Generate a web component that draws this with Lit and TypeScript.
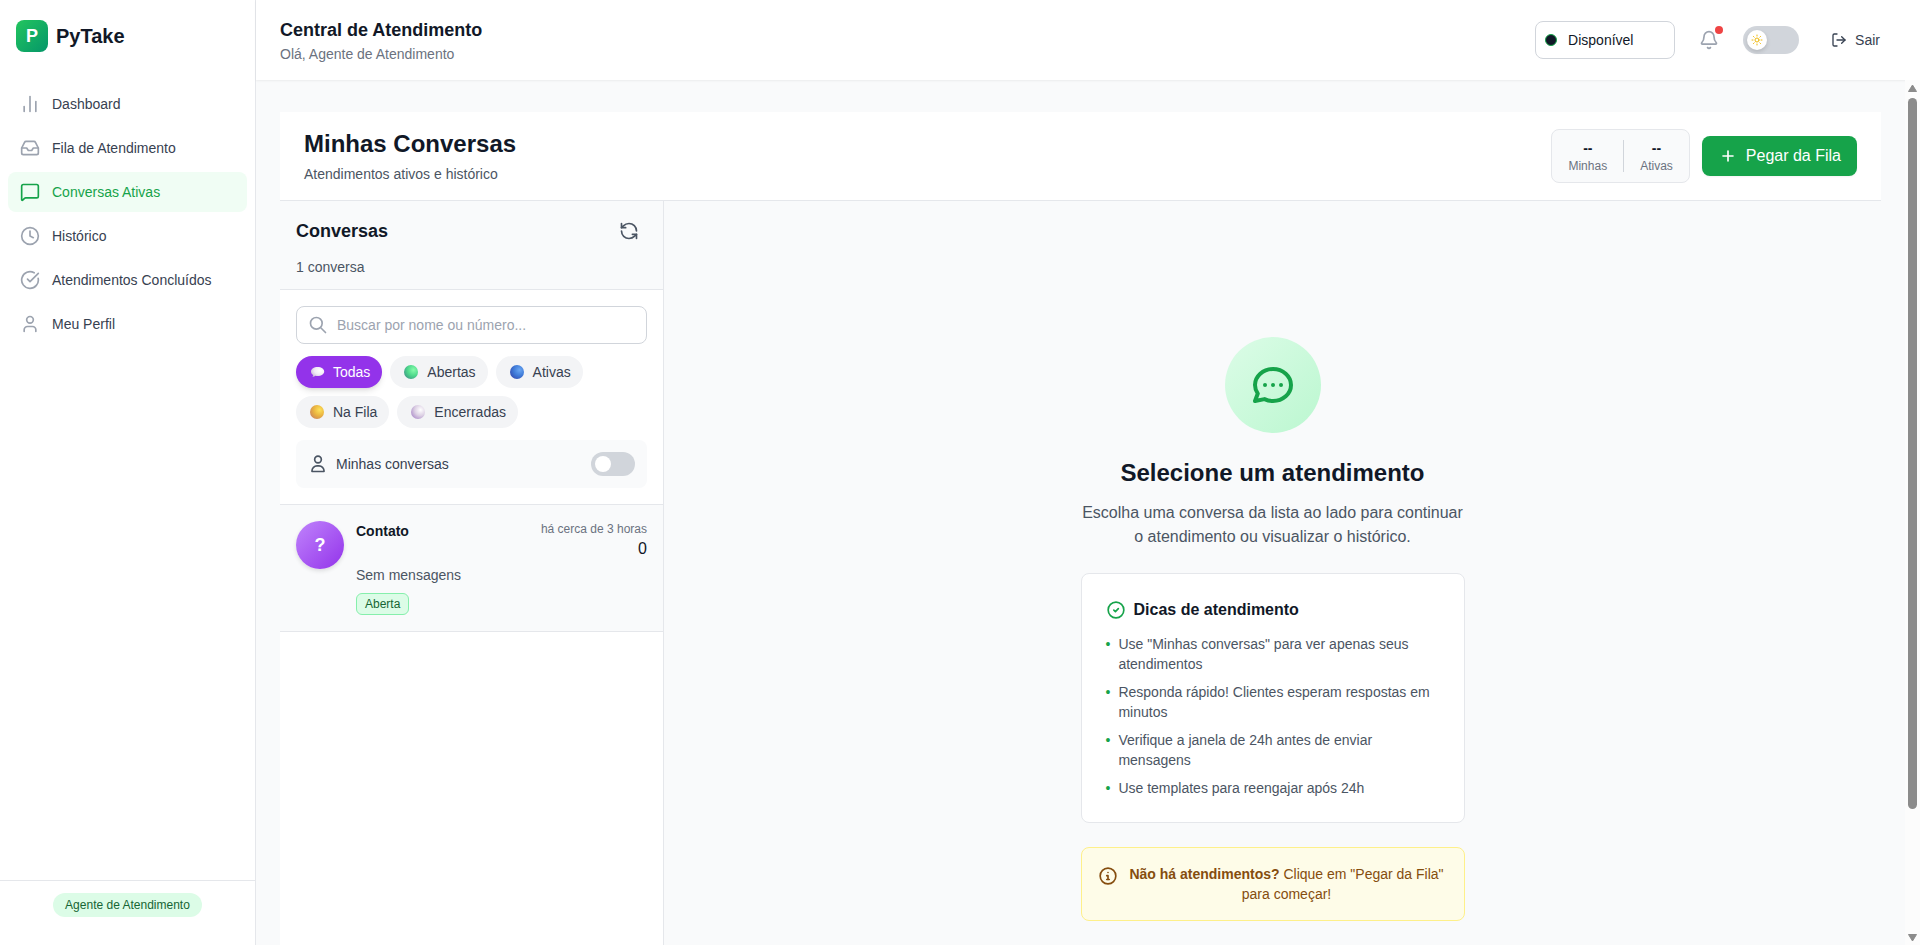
import { LitElement, html, css, svg, TemplateResult } from "lit";
import { customElement, property, state } from "lit/decorators.js";
import { classMap } from "lit/directives/class-map.js";

const GLYPHS: Record<string, TemplateResult> = {
  chart: svg`<path d="M5 21v-6"/><path d="M12 21V3"/><path d="M19 21V9"/>`,
  inbox: svg`<polyline points="22 12 16 12 14 15 10 15 8 12 2 12"/><path d="M5.45 5.11 2 12v6a2 2 0 0 0 2 2h16a2 2 0 0 0 2-2v-6l-3.45-6.89A2 2 0 0 0 16.76 4H7.24a2 2 0 0 0-1.79 1.11z"/>`,
  message: svg`<path d="M22 17a2 2 0 0 1-2 2H6.828a2 2 0 0 0-1.414.586l-2.202 2.202A.71.71 0 0 1 2 21.286V5a2 2 0 0 1 2-2h16a2 2 0 0 1 2 2z"/>`,
  clock: svg`<circle cx="12" cy="12" r="10"/><path d="M12 6v6l4 2"/>`,
  done: svg`<path d="M21.801 10A10 10 0 1 1 17 3.335"/><path d="m9 11 3 3L22 4"/>`,
  user: svg`<path d="M19 21v-2a4 4 0 0 0-4-4H9a4 4 0 0 0-4 4v2"/><circle cx="12" cy="7" r="4"/>`,
  person: svg`<circle cx="12" cy="6.6" r="4"/><path d="M4.800 21v-.8a6 6 0 0 1 6-6h2.400a6 6 0 0 1 6 6v.8z"/>`,
  bell: svg`<path d="M10.268 21a2 2 0 0 0 3.464 0"/><path d="M3.262 15.326A1 1 0 0 0 4 17h16a1 1 0 0 0 .74-1.673C19.41 13.956 18 12.499 18 8A6 6 0 0 0 6 8c0 4.499-1.411 5.956-2.738 7.326"/>`,
  logout: svg`<path d="m16 17 5-5-5-5"/><path d="M21 12H9"/><path d="M9 21H5a2 2 0 0 1-2-2V5a2 2 0 0 1 2-2h4"/>`,
  plus: svg`<path d="M6 12h12"/><path d="M12 6v12"/>`,
  search: svg`<path d="m21 21-6-6m2-5a7 7 0 1 1-14 0 7 7 0 0 1 14 0z"/>`,
  refresh: svg`<path d="M21 12a9 9 0 0 0-9-9 9.75 9.75 0 0 0-6.74 2.74L3 8"/><path d="M3 3v5h5"/><path d="M3 12a9 9 0 0 0 9 9 9.75 9.75 0 0 0 6.74-2.74L21 16"/><path d="M16 16h5v5"/>`,
  chat: svg`<path d="M8 12h.01M12 12h.01M16 12h.01M21 12c0 4.418-4.030 8-9 8a9.863 9.863 0 0 1-4.255-.949L3 20l1.395-3.720C3.512 15.042 3 13.574 3 12c0-4.418 4.030-8 9-8s9 3.582 9 8z"/>`,
  tip: svg`<circle cx="12" cy="12" r="9.400"/><path d="m9.400 12.200 1.900 1.800 3.500-3.600"/>`,
  info: svg`<circle cx="12" cy="12" r="9.400"/><path d="M12 7.800h.01"/><path d="M10.500 11.600H12v4.400"/><path d="M10.500 16.200h3"/>`,
  sun: svg`<circle cx="12" cy="12" r="4"/><path d="M12 2v2M12 20v2M4.930 4.930l1.410 1.410M17.660 17.660l1.410 1.410M2 12h2M20 12h2M6.340 17.660l-1.410 1.410M19.070 4.930l-1.410 1.410"/>`,
};

@customElement("app-icon")
export class AppIcon extends LitElement {
  @property() name = "";

  static styles = css`
    :host { display: block; flex: none; width: 20px; height: 20px; }
    svg { display: block; width: 100%; height: 100%; }
  `;

  render() {
    return html`<svg viewBox="0 0 24 24" fill="none" stroke="currentColor" stroke-width="2" stroke-linecap="round" stroke-linejoin="round" aria-hidden="true">${GLYPHS[this.name]}</svg>`;
  }
}

@customElement("app-orb")
export class AppOrb extends LitElement {
  @property() kind = "";

  static styles = css`
    :host { display: block; flex: none; width: 17px; height: 18px; }
    svg { display: block; }
  `;

  private static tones: Record<string, string[]> = {
    green: ["#86fbab", "#4fd98c", "#3f9e86"],
    blue: ["#6aa6f2", "#3f7bd8", "#3551b4"],
    yellow: ["#fde25a", "#eab440", "#cf8a58"],
    white: ["#ffffff", "#dcd0e4", "#b193cc"],
    balloon: ["#ffffff", "#f1eaf6", "#cdbdd9"],
  };

  render() {
    const tone = AppOrb.tones[this.kind];
    return html`<svg width="18" height="18" viewBox="0 0 18 18" aria-hidden="true">
      <defs>
        <radialGradient id="g" cx="0.68" cy="0.35" r="0.75">
          <stop offset="0" stop-color=${tone[0]} />
          <stop offset="0.55" stop-color=${tone[1]} />
          <stop offset="1" stop-color=${tone[2]} />
        </radialGradient>
      </defs>
      ${this.kind === "balloon"
        ? svg`<path fill="url(#g)" d="M9.600 4c3.800 0 6.600 1.900 6.600 4.500s-2.800 4.500-6.600 4.500c-.8 0-1.600-.1-2.300-.3-.7.700-1.700 1.200-2.900 1.200.6-.6.800-1.300.7-2C3.700 11.100 3 9.900 3 8.500 3 5.900 5.800 4 9.600 4z"/>`
        : svg`<circle cx="9" cy="9" r="7" fill="url(#g)"/>`}
    </svg>`;
  }
}

@customElement("app-root")
export class AppRoot extends LitElement {
  @state() private filter = "Todas";

  private nav = [
    { icon: "chart", label: "Dashboard" },
    { icon: "inbox", label: "Fila de Atendimento" },
    { icon: "message", label: "Conversas Ativas", active: true },
    { icon: "clock", label: "Histórico" },
    { icon: "done", label: "Atendimentos Concluídos" },
    { icon: "user", label: "Meu Perfil" },
  ];

  private filters = [
    { kind: "balloon", label: "Todas" },
    { kind: "green", label: "Abertas" },
    { kind: "blue", label: "Ativas" },
    { kind: "yellow", label: "Na Fila" },
    { kind: "white", label: "Encerradas" },
  ];

  private tips = [
    'Use "Minhas conversas" para ver apenas seus atendimentos',
    "Responda rápido! Clientes esperam respostas em minutos",
    "Verifique a janela de 24h antes de enviar mensagens",
    "Use templates para reengajar após 24h",
  ];

  static styles = css`
    :host {
      display: flex;
      height: 100vh;
      overflow: hidden;
      background: #f9fafb;
      color: #111827;
      font: 16px/24px "Liberation Sans", Arial, sans-serif;
    }
    *, *::before, *::after { box-sizing: border-box; }
    h1, h2, h3, p, ul { margin: 0; padding: 0; }
    ul { list-style: none; }
    a { color: inherit; text-decoration: none; }
    button, input, select { margin: 0; font: inherit; color: inherit; }
    button { border: 0; background: none; cursor: pointer; }
    .small { font-size: 14px; line-height: 20px; }
    .tiny { font-size: 12px; line-height: 16px; }
    .muted { color: #6b7280; }
    .soft { color: #4b5563; }

    .sidebar {
      display: flex;
      flex-direction: column;
      flex: none;
      width: 256px;
      background: #fff;
      border-right: 1px solid #e5e7eb;
    }
    .brand {
      display: flex;
      align-items: center;
      gap: 8px;
      height: 72px;
      padding: 0 16px;
      font-size: 20px;
      font-weight: 700;
    }
    .mark {
      display: grid;
      place-items: center;
      width: 32px;
      height: 32px;
      border-radius: 8px;
      background: linear-gradient(135deg, #22c55e, #059669);
      color: #fff;
      font-size: 18px;
    }
    .nav {
      display: flex;
      flex-direction: column;
      flex: 1;
      gap: 4px;
      padding: 12px 8px;
    }
    .link {
      display: flex;
      align-items: center;
      gap: 12px;
      height: 40px;
      padding: 0 12px;
      border-radius: 8px;
      color: #374151;
    }
    .link app-icon { color: #9ca3af; }
    .link.active { background: #f0fdf4; color: #16a34a; }
    .link.active app-icon { color: #16a34a; }
    .role {
      display: flex;
      justify-content: center;
      padding: 12px 16px 28px;
      border-top: 1px solid #e5e7eb;
    }
    .role-pill {
      padding: 4px 12px;
      border-radius: 12px;
      background: #dcfce7;
      color: #166534;
    }

    .body { display: flex; flex-direction: column; flex: 1; min-width: 0; }
    .topbar {
      display: flex;
      align-items: center;
      justify-content: space-between;
      flex: none;
      height: 80px;
      padding: 0 24px;
      background: #fff;
      box-shadow: 0 1px 2px rgba(0, 0, 0, 0.06);
    }
    .topbar h1 { font-size: 18px; line-height: 28px; }
    .tools { display: flex; align-items: center; gap: 16px; }
    .status { position: relative; display: block; }
    .status select {
      display: block;
      width: 140px;
      height: 38px;
      padding: 0 12px 0 32px;
      border: 1px solid #d1d5db;
      border-radius: 8px;
      background: #fff;
      appearance: none;
    }
    .status-dot {
      position: absolute;
      top: 13px;
      left: 10px;
      width: 12px;
      height: 12px;
      border: 1px solid #16a34a;
      border-radius: 50%;
      background: #111827;
      pointer-events: none;
    }
    .icon-button { position: relative; padding: 8px; border-radius: 8px; color: #9ca3af; }
    .icon-button.dark { color: #4b5563; }
    .alert {
      position: absolute;
      top: 4px;
      right: 4px;
      width: 8px;
      height: 8px;
      border-radius: 50%;
      background: #ef4444;
    }
    .theme { position: relative; display: block; height: 28px; }
    .track {
      display: flex;
      align-items: center;
      width: 44px;
      height: 24px;
      margin: 0;
      padding: 0 4px;
      border-radius: 14px;
      background: #d1d5db;
      appearance: none;
      cursor: pointer;
    }
    .track::before {
      content: "";
      width: 16px;
      height: 16px;
      border-radius: 50%;
      background: #fff;
    }
    .track:checked { justify-content: flex-end; background: #16a34a; }
    .track.large { width: 56px; height: 28px; }
    .track.large::before { width: 20px; height: 20px; box-shadow: 0 2px 4px rgba(0, 0, 0, 0.15); }
    .sun {
      position: absolute;
      top: 8px;
      left: 8px;
      width: 12px;
      height: 12px;
      color: #f0b90b;
      pointer-events: none;
    }
    .exit {
      display: flex;
      align-items: center;
      gap: 8px;
      padding: 8px 16px;
      color: #374151;
    }
    .exit app-icon { width: 16px; height: 16px; }

    .viewport { display: flex; flex: 1; min-height: 0; }
    .scroller {
      flex: 1;
      min-width: 0;
      overflow: auto;
      scrollbar-width: none;
      padding: 32px 24px;
    }
    .rail {
      display: flex;
      flex-direction: column;
      align-items: center;
      flex: none;
      width: 15px;
      padding: 4px 0 3px;
      background: #fcfcfc;
    }
    .rail svg { display: block; flex: none; }
    .thumb { width: 9px; flex: 711; margin-top: 6px; border-radius: 5px; background: #8b8b8b; }
    .rest { flex: 125; }

    .board { display: flex; flex-direction: column; min-height: 100vh; }
    .board-head {
      display: flex;
      align-items: center;
      justify-content: space-between;
      padding: 16px 24px;
      background: #fff;
      border-bottom: 1px solid #e5e7eb;
    }
    .board-head h2, .welcome h2 { font-size: 24px; line-height: 32px; }
    .board-head p { margin-top: 4px; }
    .actions { display: flex; align-items: center; gap: 12px; }
    .stats {
      display: flex;
      align-items: center;
      gap: 16px;
      padding: 8px 16px;
      border: 1px solid #e5e7eb;
      border-radius: 8px;
      background: #f9fafb;
      text-align: center;
    }
    .stats strong { display: block; }
    .rule { width: 1px; height: 32px; background: #d1d5db; }
    .primary {
      display: flex;
      align-items: center;
      gap: 8px;
      height: 40px;
      padding: 0 16px;
      border-radius: 8px;
      background: #16a34a;
      color: #fff;
      box-shadow: 0 1px 2px rgba(0, 0, 0, 0.05);
    }

    .columns { display: flex; flex: 1; }
    .list {
      flex: none;
      width: 384px;
      background: #fff;
      border-right: 1px solid #e5e7eb;
    }
    .list-head {
      padding: 12px 16px;
      background: #f9fafb;
      border-bottom: 1px solid #e5e7eb;
    }
    .list-title { display: flex; align-items: center; justify-content: space-between; }
    .list-title h3 { font-size: 18px; line-height: 28px; }
    .list-head p { margin-top: 8px; }
    .controls {
      display: flex;
      flex-direction: column;
      gap: 12px;
      padding: 16px;
      border-bottom: 1px solid #e5e7eb;
    }
    .search { position: relative; display: block; }
    .search app-icon { position: absolute; top: 9px; left: 12px; color: #9ca3af; }
    .search input {
      display: block;
      width: 100%;
      height: 38px;
      padding: 0 12px 0 40px;
      border: 1px solid #d1d5db;
      border-radius: 8px;
      background: #fff;
      outline: none;
    }
    .search input::placeholder { color: #9ca3af; opacity: 1; }
    .filters { display: flex; flex-wrap: wrap; gap: 8px; }
    .chip {
      display: flex;
      align-items: center;
      gap: 8px;
      height: 32px;
      padding: 0 12px;
      border-radius: 16px;
      background: #f3f4f6;
      color: #374151;
    }
    .chip.on {
      background: #9333ea;
      color: #fff;
      box-shadow: 0 4px 6px -1px rgba(0, 0, 0, 0.1), 0 2px 4px -2px rgba(0, 0, 0, 0.1);
    }
    .mine {
      display: flex;
      align-items: center;
      gap: 8px;
      padding: 12px;
      border-radius: 8px;
      background: #f9fafb;
      color: #374151;
    }
    .mine app-icon { color: #4b5563; }
    .mine span { flex: 1; }
    .talk {
      display: flex;
      gap: 12px;
      padding: 16px;
      background: #f9fafb;
      border-bottom: 1px solid #e5e7eb;
    }
    .avatar {
      display: grid;
      place-items: center;
      flex: none;
      width: 48px;
      height: 48px;
      border-radius: 50%;
      background: linear-gradient(135deg, #c084fc, #9333ea);
      color: #fff;
      font-size: 18px;
      font-weight: 700;
      box-shadow: 0 2px 4px rgba(0, 0, 0, 0.12);
    }
    .talk-main { flex: 1; min-width: 0; }
    .talk-top { display: flex; justify-content: space-between; margin-bottom: 4px; }
    .talk-meta { display: flex; flex-direction: column; align-items: flex-end; }
    .badge {
      display: block;
      width: fit-content;
      margin-top: 8px;
      padding: 2px 8px;
      border: 1px solid #86efac;
      border-radius: 6px;
      background: #dcfce7;
      color: #166534;
    }

    .stage { display: grid; place-items: center; flex: 1; min-width: 0; padding: 32px; }
    .welcome {
      display: flex;
      flex-direction: column;
      align-items: center;
      width: 100%;
      max-width: 384px;
      text-align: center;
    }
    .halo {
      display: grid;
      place-items: center;
      width: 96px;
      height: 96px;
      margin-bottom: 24px;
      border-radius: 50%;
      background: linear-gradient(135deg, #dcfce7, #bbf7d0);
      color: #16a34a;
    }
    .halo app-icon { width: 48px; height: 48px; }
    .welcome .lead { margin: 12px 0 24px; }
    .tips {
      width: 100%;
      padding: 24px;
      border: 1px solid #e5e7eb;
      border-radius: 8px;
      background: #fff;
      text-align: left;
    }
    .tips h3 {
      display: flex;
      align-items: center;
      gap: 8px;
      margin-bottom: 12px;
      font-size: 16px;
      line-height: 24px;
    }
    .tips app-icon, .bullet { color: #16a34a; }
    .tips ul { display: flex; flex-direction: column; gap: 8px; }
    .tips li { display: flex; gap: 8px; }
    .notice {
      display: flex;
      gap: 8px;
      width: 100%;
      margin-top: 24px;
      padding: 16px;
      border: 1px solid #fef08a;
      border-radius: 8px;
      background: #fefce8;
      color: #854d0e;
    }
    .notice app-icon { margin-top: 2px; }
    .notice p { flex: 1; }
  `;

  render() {
    return html`
      <aside class="sidebar">
        <div class="brand"><span class="mark">P</span><span>PyTake</span></div>
        <nav class="nav small">
          ${this.nav.map(
            (item) => html`<a href="#" class=${classMap({ link: true, active: !!item.active })}>
              <app-icon name=${item.icon}></app-icon><span>${item.label}</span>
            </a>`
          )}
        </nav>
        <div class="role"><span class="role-pill tiny">Agente de Atendimento</span></div>
      </aside>

      <div class="body">
        <header class="topbar">
          <div>
            <h1>Central de Atendimento</h1>
            <p class="small muted">Olá, Agente de Atendimento</p>
          </div>
          <div class="tools small">
            <label class="status">
              <select aria-label="Status">
                <option>Disponível</option>
              </select>
              <span class="status-dot"></span>
            </label>
            <button class="icon-button" aria-label="Notificações">
              <app-icon name="bell"></app-icon><span class="alert"></span>
            </button>
            <label class="theme">
              <input class="track large" type="checkbox" role="switch" aria-label="Tema escuro" />
              <app-icon class="sun" name="sun"></app-icon>
            </label>
            <button class="exit"><app-icon name="logout"></app-icon>Sair</button>
          </div>
        </header>

        <div class="viewport">
          <main class="scroller">
            <div class="board">
              <div class="board-head">
                <div>
                  <h2>Minhas Conversas</h2>
                  <p class="small soft">Atendimentos ativos e histórico</p>
                </div>
                <div class="actions">
                  <div class="stats">
                    <div><strong class="small">--</strong><div class="tiny muted">Minhas</div></div>
                    <div class="rule"></div>
                    <div><strong class="small">--</strong><div class="tiny muted">Ativas</div></div>
                  </div>
                  <button class="primary"><app-icon name="plus"></app-icon>Pegar da Fila</button>
                </div>
              </div>

              <div class="columns">
                <section class="list">
                  <div class="list-head">
                    <div class="list-title">
                      <h3>Conversas</h3>
                      <button class="icon-button dark" aria-label="Atualizar"><app-icon name="refresh"></app-icon></button>
                    </div>
                    <p class="small soft">1 conversa</p>
                  </div>
                  <div class="controls small">
                    <label class="search">
                      <app-icon name="search"></app-icon>
                      <input type="text" aria-label="Buscar conversas" placeholder="Buscar por nome ou número..." />
                    </label>
                    <div class="filters">
                      ${this.filters.map(
                        (f) => html`<button
                          class=${classMap({ chip: true, on: f.label === this.filter })}
                          @click=${() => (this.filter = f.label)}
                        ><app-orb kind=${f.kind}></app-orb>${f.label}</button>`
                      )}
                    </div>
                    <label class="mine">
                      <app-icon name="person"></app-icon>
                      <span>Minhas conversas</span>
                      <input class="track" type="checkbox" role="switch" />
                    </label>
                  </div>
                  <a class="talk" href="#">
                    <span class="avatar">?</span>
                    <div class="talk-main">
                      <div class="talk-top">
                        <strong class="small">Contato</strong>
                        <div class="talk-meta">
                          <span class="tiny muted">há cerca de 3 horas</span>
                          <span>0</span>
                        </div>
                      </div>
                      <p class="small soft">Sem mensagens</p>
                      <span class="badge tiny">Aberta</span>
                    </div>
                  </a>
                </section>

                <section class="stage">
                  <div class="welcome">
                    <div class="halo"><app-icon name="chat"></app-icon></div>
                    <h2>Selecione um atendimento</h2>
                    <p class="lead soft">Escolha uma conversa da lista ao lado para continuar o atendimento ou visualizar o histórico.</p>
                    <div class="tips">
                      <h3><app-icon name="tip"></app-icon>Dicas de atendimento</h3>
                      <ul class="small soft">
                        ${this.tips.map((tip) => html`<li><span class="bullet">•</span><span>${tip}</span></li>`)}
                      </ul>
                    </div>
                    <div class="notice small">
                      <app-icon name="info"></app-icon>
                      <p><strong>Não há atendimentos?</strong> Clique em "Pegar da Fila" para começar!</p>
                    </div>
                  </div>
                </section>
              </div>
            </div>
          </main>
          <div class="rail" aria-hidden="true">
            <svg width="9" height="8" viewBox="0 0 9 8"><path d="M4.500 1 8.500 7.500h-8z" fill="#8b8b8b" stroke="#8b8b8b" stroke-linejoin="round"/></svg>
            <div class="thumb"></div>
            <div class="rest"></div>
            <svg width="9" height="8" viewBox="0 0 9 8"><path d="M4.500 7 8.500 .5h-8z" fill="#8b8b8b" stroke="#8b8b8b" stroke-linejoin="round"/></svg>
          </div>
        </div>
      </div>
    `;
  }
}
